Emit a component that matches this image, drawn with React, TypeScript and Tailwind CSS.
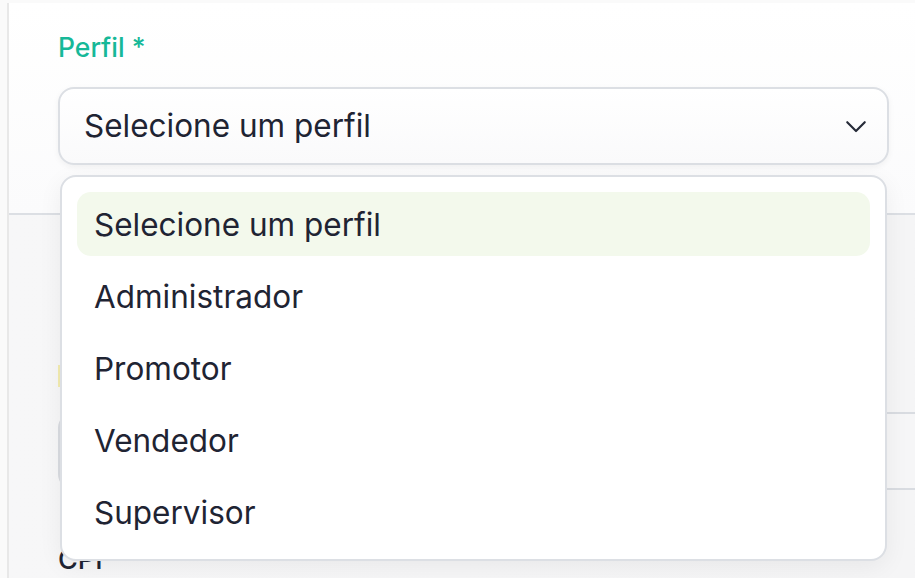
import React from "react";

const font = { fontFamily: "Inter, 'Noto Sans', sans-serif" };

export default function App() {
  const items = ["Selecione um perfil", "Administrador", "Promotor", "Vendedor", "Supervisor"];
  return (
    <div className="relative w-[915px] h-[578px] overflow-hidden bg-[#fafafa]" style={font}>
      <div className="pl-[7px] pt-[3px] h-full">
        <div className="h-full flex flex-col border-l-2 border-[#e8e8e8] bg-white overflow-hidden">
          <div className="h-[212px] pl-[49px] pt-[26px] border-b-2 border-[#dcdfe4] bg-gradient-to-b from-white to-[#fbfbfc]">
            <div className="text-[26.5px] leading-[36px] font-medium text-[#16b898]">Perfil *</div>
            <div className="mt-[22px] w-[831px] h-[78px] rounded-[16px] border-2 border-[#dcdfe4] bg-gradient-to-b from-white to-[#fafafb] shadow-[0_2px_6px_rgba(0,0,0,0.05)] flex items-center justify-between pl-[24px] pr-[16px]">
              <span className="text-[31.5px] text-[#1f2433]">Selecione um perfil</span>
              <svg width="30" height="30" viewBox="0 0 24 24" fill="none" stroke="#262b38" strokeWidth="1.7" strokeLinecap="round" strokeLinejoin="round">
                <path d="M5 9l7 7 7-7" />
              </svg>
            </div>
          </div>
          <div className="flex-1 pl-[49px] bg-gradient-to-r from-[#f7f7f8] to-[#f5f5f6]">
            <div className="mt-[150px] h-[22px] w-[4px] bg-[#f3ecb0]" />
            <div className="mt-[25px] w-[900px] h-[78px] rounded-[16px] border-2 border-[#d9dce1] bg-[#f6f6f7]" />
            <div className="mt-[52px] text-[27px] leading-[36px] font-medium text-[#1f2433]">CPF</div>
          </div>
        </div>
      </div>
      <div className="absolute left-[60px] top-[175px] w-[827px] rounded-[16px] border-2 border-[#dcdfe4] bg-white shadow-[0_6px_24px_rgba(0,0,0,0.06)] p-[15px] flex flex-col gap-[8px]">
        {items.map((it, i) => (
          <div
            key={it}
            className={
              i === 0
                ? "h-[64px] rounded-[14px] bg-[#f3f9ec] flex items-center pl-[17px] pt-[2px] text-[31.5px] text-[#1f2433]"
                : "h-[64px] rounded-[14px] flex items-center pl-[17px] pt-[2px] text-[31.5px] text-[#1f2433]"
            }
          >
            {it}
          </div>
        ))}
      </div>
    </div>
  );
}
